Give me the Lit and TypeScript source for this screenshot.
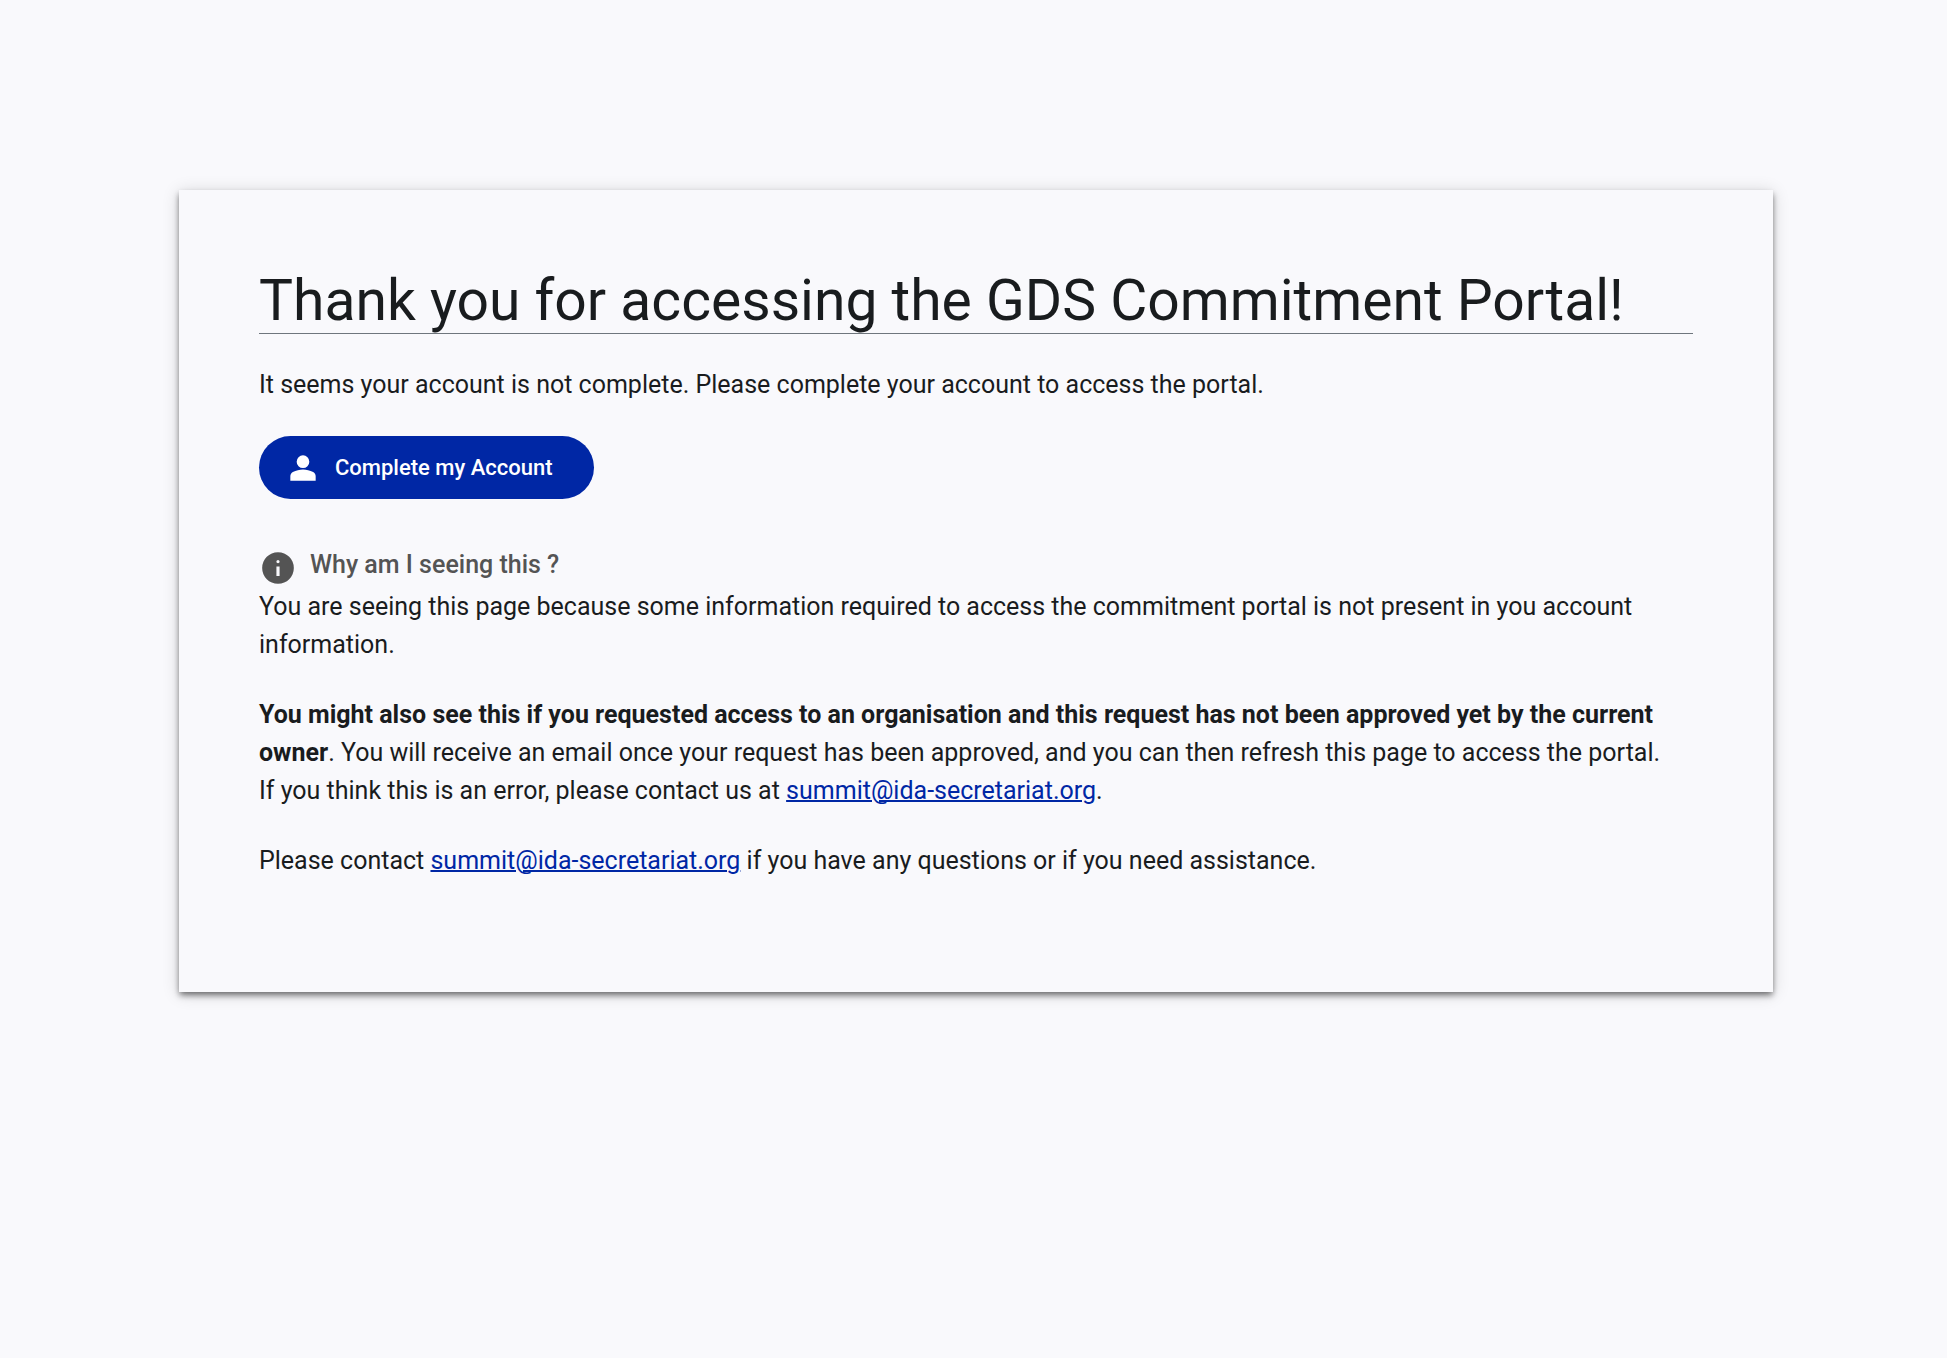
import { LitElement, html, css } from "lit";
import { customElement } from "lit/decorators.js";

const contact = "summit@ida-secretariat.org";

@customElement("app-root")
class AppRoot extends LitElement {
  static styles = css`
    :host {
      display: block;
      min-height: 100vh;
      box-sizing: border-box;
      padding: 190px 174px 190px 179px;
      background: #f9f9fc;
      color: #191c1e;
      font: 400 25px/38px Roboto, sans-serif;
    }
    .card {
      padding: 80px;
      background: #f9f9fc;
      box-shadow: 0 3px 6px -2px rgba(0, 0, 0, 0.4), 0 4px 6px 0 rgba(0, 0, 0, 0.28), 0 2px 16px 0 rgba(0, 0, 0, 0.16);
    }
    .title {
      margin: 0 0 32px;
      padding-bottom: 2px;
      border-bottom: 1px solid #6f767d;
      font-size: 57px;
      line-height: 61px;
      font-weight: 400;
    }
    .text {
      margin: 0 0 32px;
    }
    .link {
      color: #0027a5;
      text-decoration-thickness: 2px;
    }
    .action {
      display: inline-flex;
      align-items: center;
      gap: 13px;
      height: 63px;
      padding: 0 41px 0 25px;
      border: 0;
      border-radius: 32px;
      background: #0027a5;
      color: #fff;
      font: 500 22px/32px Roboto, sans-serif;
      cursor: pointer;
    }
    .icon {
      flex: none;
      width: 38px;
      height: 38px;
      fill: currentColor;
    }
    .question {
      display: flex;
      align-items: flex-end;
      gap: 13px;
      margin: 44px 0 0;
      padding-bottom: 1px;
      color: #545454;
      font-size: inherit;
      line-height: 44px;
      font-weight: 500;
    }
  `;

  render() {
    return html`
      <main class="card">
        <h1 class="title">Thank you for accessing the GDS Commitment Portal!</h1>
        <p class="text">It seems your account is not complete. Please complete your account to access the portal.</p>
        <button class="action" type="button">
          <svg class="icon" viewBox="0 -960 960 960" aria-hidden="true">
            <path d="M480-480q-66 0-113-47t-47-113q0-66 47-113t113-47q66 0 113 47t47 113q0 66-47 113t-113 47ZM160-160v-112q0-34 17.500-62.500T224-378q62-31 126-46.500T480-440q66 0 130 15.500T736-378q29 15 46.500 43.500T800-272v112H160Z" />
          </svg>
          Complete my Account
        </button>
        <h2 class="question">
          <svg class="icon" viewBox="0 -960 960 960" aria-hidden="true">
            <path d="M440-280h80v-240h-80v240Zm40-320q17 0 28.500-11.500T520-640q0-17-11.500-28.500T480-680q-17 0-28.500 11.500T440-640q0 17 11.500 28.500T480-600Zm0 520q-83 0-156-31.500T197-197q-54-54-85.500-127T80-480q0-83 31.500-156T197-763q54-54 127-85.500T480-880q83 0 156 31.500T763-763q54 54 85.500 127T880-480q0 83-31.500 156T763-197q-54 54-127 85.500T480-80Z" />
          </svg>
          Why am I seeing this ?
        </h2>
        <p class="text">You are seeing this page because some information required to access the commitment portal is not present in you account<br>information.</p>
        <p class="text"><b>You might also see this if you requested access to an organisation and this request has not been approved yet by the current owner</b>. You will receive an email once your request has been approved, and you can then refresh this page to access the portal.<br>If you think this is an error, please contact us at <a class="link" href="mailto:${contact}">${contact}</a>.</p>
        <p class="text">Please contact <a class="link" href="mailto:${contact}">${contact}</a> if you have any questions or if you need assistance.</p>
      </main>
    `;
  }
}
